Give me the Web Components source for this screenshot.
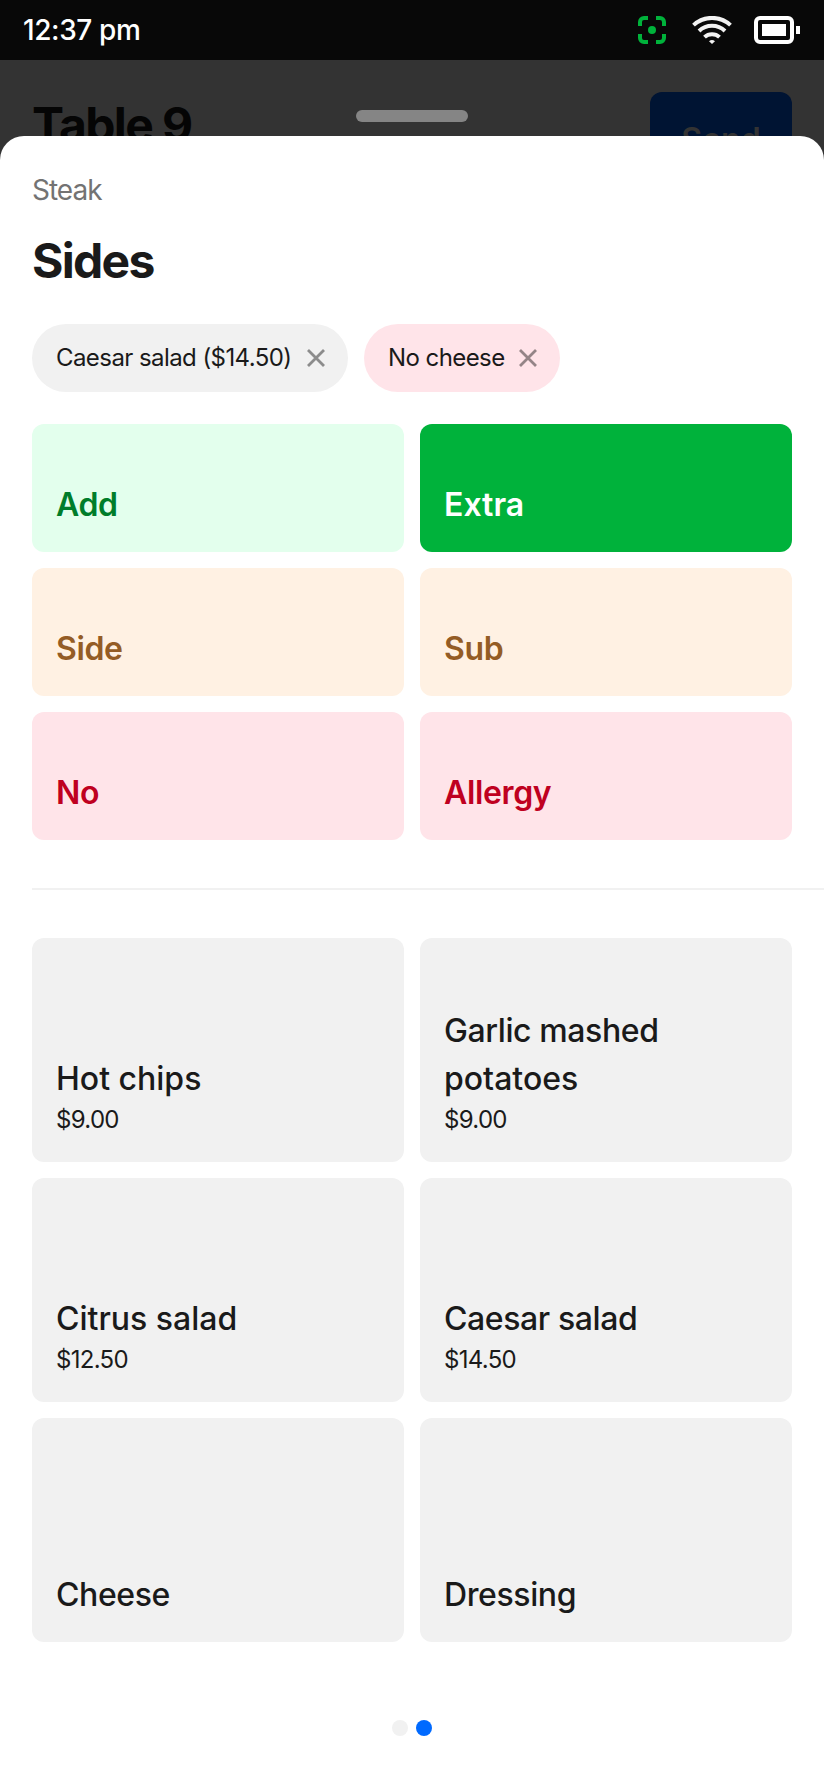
<!DOCTYPE html>
<html lang="en">
<head>
<meta charset="utf-8">
<title>Sides</title>
<style>
    body {
        margin: 0;
        background: #fff;
        color: #1a1a1a;
        font-family: Inter, "Liberation Sans", sans-serif;
    }
    .modifiers { --tile-height: 128px; --tile-weight: 600; --tile-spacing: -0.35px; padding-top: 32px; }
    .items { --tile-height: 224px; --tile-spacing: -0.4px; padding-top: 48px; }
    .normal { --tile-spacing: 0; }
</style>
</head>
<body>
<status-bar>12:37 pm</status-bar>
<order-header action="Send">Table 9</order-header>
<bottom-sheet>
    <span slot="eyebrow">Steak</span>
    <span slot="title">Sides</span>
    <selected-chip slot="chips" style="width:316px">Caesar salad ($14.50)</selected-chip>
    <selected-chip slot="chips" tone="red" style="width:196px">No cheese</selected-chip>
    <tile-grid class="modifiers">
        <option-tile tone="green">Add</option-tile>
        <option-tile tone="green-active" class="normal">Extra</option-tile>
        <option-tile tone="orange">Side</option-tile>
        <option-tile tone="orange">Sub</option-tile>
        <option-tile tone="red">No</option-tile>
        <option-tile tone="red">Allergy</option-tile>
    </tile-grid>
    <sheet-divider></sheet-divider>
    <tile-grid class="items">
        <option-tile price="$9.00" class="normal">Hot chips</option-tile>
        <option-tile price="$9.00"><span>Garlic mashed</span><br><span style="letter-spacing:0">potatoes</span></option-tile>
        <option-tile price="$12.50" class="normal">Citrus salad</option-tile>
        <option-tile price="$14.50">Caesar salad</option-tile>
        <option-tile>Cheese</option-tile>
        <option-tile>Dressing</option-tile>
    </tile-grid>
    <page-dots slot="footer" count="2" current="1"></page-dots>
</bottom-sheet>

<script>
class StatusBar extends HTMLElement {
    constructor(){
        super();
        this.attachShadow({mode: 'open'})
        this.shadowRoot.innerHTML = `
            <style>
                :host {
                    display: flex;
                    align-items: center;
                    box-sizing: border-box;
                    height: 60px;
                    padding: 0 24px 0 23px;
                    background: #080808;
                    color: #fff;
                    font-size: 28px;
                    font-weight: 500;
                    letter-spacing: -0.4px;
                }
                .time { flex: 1; }
                svg { display: block; }
                .wifi { margin: 0 22px 0 26px; }
            </style>
            <span class="time"><slot></slot></span>
            <svg width="28" height="28" viewBox="0 0 28 28" fill="none" stroke="#00b23b" stroke-width="4">
                <path d="M2 10V6a4 4 0 0 1 4-4h4M18 2h4a4 4 0 0 1 4 4v4M26 18v4a4 4 0 0 1-4 4h-4M10 26H6a4 4 0 0 1-4-4v-4"/>
                <circle cx="14" cy="14" r="4" fill="#00b23b" stroke="none"/>
            </svg>
            <svg class="wifi" width="40" height="28" viewBox="0 0 40 28" fill="none" stroke="#f2f2f2" stroke-width="4">
                <path d="M1.5 9.1A27.3 27.3 0 0 1 38.5 9.1M7 15A19 19 0 0 1 33 15M12.5 21.1A11 11 0 0 1 27.5 21.1"/>
                <path d="M17 25.2a5 5 0 0 1 6 0L20 28z" fill="#f2f2f2" stroke="none"/>
            </svg>
            <svg width="46" height="28" viewBox="0 0 46 28">
                <rect x="2" y="2" width="36" height="24" rx="4" fill="none" stroke="#fff" stroke-width="4"/>
                <path d="M8 8h24v12H8zM42 10h4v8h-4z" fill="#fff"/>
            </svg>
        `;
    }
}

// dimmed screen behind the sheet
class OrderHeader extends HTMLElement {
    constructor(){
        super();
        this.attachShadow({mode: 'open'})
        this.shadowRoot.innerHTML = `
            <style>
                :host {
                    display: flex;
                    justify-content: space-between;
                    align-items: flex-start;
                    position: relative;
                    box-sizing: border-box;
                    height: 106px;
                    padding: 32px 32px 0;
                    overflow: hidden;
                    background: #333;
                }
                .title {
                    padding-top: 1px;
                    color: #050505;
                    font-size: 48px;
                    font-weight: 700;
                    letter-spacing: -1.6px;
                    line-height: 64px;
                }
                .action {
                    width: 142px;
                    border-radius: 12px;
                    background: #001433;
                    color: #333;
                    font-size: 32px;
                    font-weight: 600;
                    line-height: 96px;
                    text-align: center;
                }
                .handle {
                    position: absolute;
                    top: 50px;
                    left: 356px;
                    width: 112px;
                    height: 12px;
                    border-radius: 6px;
                    background: #858585;
                }
            </style>
            <span class="title"><slot></slot></span>
            <span class="action"></span>
            <div class="handle"></div>
        `;
    }

    connectedCallback(){
        this.shadowRoot.querySelector('.action').textContent = this.getAttribute('action')
    }
}

class BottomSheet extends HTMLElement {
    constructor(){
        super();
        this.attachShadow({mode: 'open'})
        this.shadowRoot.innerHTML = `
            <style>
                :host {
                    display: block;
                    position: relative;
                    box-sizing: border-box;
                    height: 1648px;
                    margin-top: -30px;
                    padding: 32px 0 0 32px;
                    border-radius: 24px 24px 0 0;
                    background: #fff;
                }
                .eyebrow {
                    color: #737373;
                    font-size: 28px;
                    letter-spacing: -1px;
                    line-height: 44px;
                }
                .title {
                    padding-top: 17px;
                    font-size: 48px;
                    font-weight: 700;
                    letter-spacing: -1.7px;
                    line-height: 64px;
                }
                .chips {
                    display: flex;
                    gap: 16px;
                    padding-top: 31px;
                }
            </style>
            <div class="eyebrow"><slot name="eyebrow"></slot></div>
            <div class="title"><slot name="title"></slot></div>
            <div class="chips"><slot name="chips"></slot></div>
            <slot></slot>
            <slot name="footer"></slot>
        `;
    }
}

class SelectedChip extends HTMLElement {
    constructor(){
        super();
        this.attachShadow({mode: 'open'})
        this.shadowRoot.innerHTML = `
            <style>
                :host {
                    display: flex;
                    justify-content: space-between;
                    align-items: center;
                    box-sizing: border-box;
                    height: 68px;
                    padding: 0 22px 0 24px;
                    border-radius: 34px;
                    background: #f1f1f1;
                    font-size: 24px;
                    letter-spacing: -0.57px;
                    white-space: nowrap;
                }
                :host([tone=red]) { background: #ffe4e9; }
                .label { padding-bottom: 2px; }
                svg { display: block; }
            </style>
            <span class="label"><slot></slot></span>
            <svg width="20" height="20" viewBox="0 0 20 20" fill="none" stroke="#000" stroke-opacity=".42" stroke-width="2.8">
                <path d="M2 2l16 16M18 2L2 18"/>
            </svg>
        `;
    }
}

class TileGrid extends HTMLElement {
    constructor(){
        super();
        this.attachShadow({mode: 'open'})
        this.shadowRoot.innerHTML = `
            <style>
                :host {
                    display: grid;
                    grid-template-columns: 1fr 1fr;
                    gap: 16px;
                    padding-right: 32px;
                }
            </style>
            <slot></slot>
        `;
    }
}

class OptionTile extends HTMLElement {
    constructor(){
        super();
        this.attachShadow({mode: 'open'})
        this.shadowRoot.innerHTML = `
            <style>
                :host {
                    display: flex;
                    flex-direction: column;
                    justify-content: flex-end;
                    box-sizing: border-box;
                    height: var(--tile-height);
                    padding: 24px 24px 23px;
                    border-radius: 12px;
                    background: #f1f1f1;
                }
                :host([tone=green]) { background: #e3ffed; color: #007d2a; }
                :host([tone=green-active]) { background: #00b23b; color: #fff; }
                :host([tone=orange]) { background: #fff1e3; color: #945c25; }
                :host([tone=red]) { background: #ffe4e9; color: #bf0020; }
                .name {
                    font-size: 32px;
                    font-weight: var(--tile-weight, 500);
                    letter-spacing: var(--tile-spacing, 0);
                    line-height: 48px;
                }
                .price {
                    padding-bottom: 2px;
                    font-size: 24px;
                    letter-spacing: -0.7px;
                    line-height: 34px;
                }
            </style>
            <span class="name"><slot></slot></span>
        `;
    }

    connectedCallback(){
        if(this.hasAttribute('price')){
            const price = document.createElement('span');
            price.className = 'price';
            price.textContent = this.getAttribute('price')
            this.shadowRoot.appendChild(price);
        }
    }
}

class SheetDivider extends HTMLElement {
    constructor(){
        super();
        this.attachShadow({mode: 'open'})
        this.shadowRoot.innerHTML = `
            <style>
                :host {
                    display: block;
                    height: 2px;
                    margin-top: 48px;
                    background: #f1f1f1;
                }
            </style>
        `;
    }
}

class PageDots extends HTMLElement {
    constructor(){
        super();
        this.attachShadow({mode: 'open'})
        this.shadowRoot.innerHTML = `
            <style>
                :host {
                    display: flex;
                    justify-content: center;
                    gap: 8px;
                    padding: 78px 32px 0 0;
                }
                i {
                    width: 16px;
                    height: 16px;
                    border-radius: 50%;
                    background: #f1f1f1;
                }
                i.current { background: #006aff; }
            </style>
        `;
    }

    connectedCallback(){
        for(let i = 0; i < Number(this.getAttribute('count')); i++){
            const dot = document.createElement('i');
            dot.classList.toggle('current', i === Number(this.getAttribute('current')))
            this.shadowRoot.appendChild(dot);
        }
    }
}

customElements.define('status-bar',StatusBar)
customElements.define('order-header',OrderHeader)
customElements.define('bottom-sheet',BottomSheet)
customElements.define('selected-chip',SelectedChip)
customElements.define('tile-grid',TileGrid)
customElements.define('option-tile',OptionTile)
customElements.define('sheet-divider',SheetDivider)
customElements.define('page-dots',PageDots)
</script>
</body>
</html>
